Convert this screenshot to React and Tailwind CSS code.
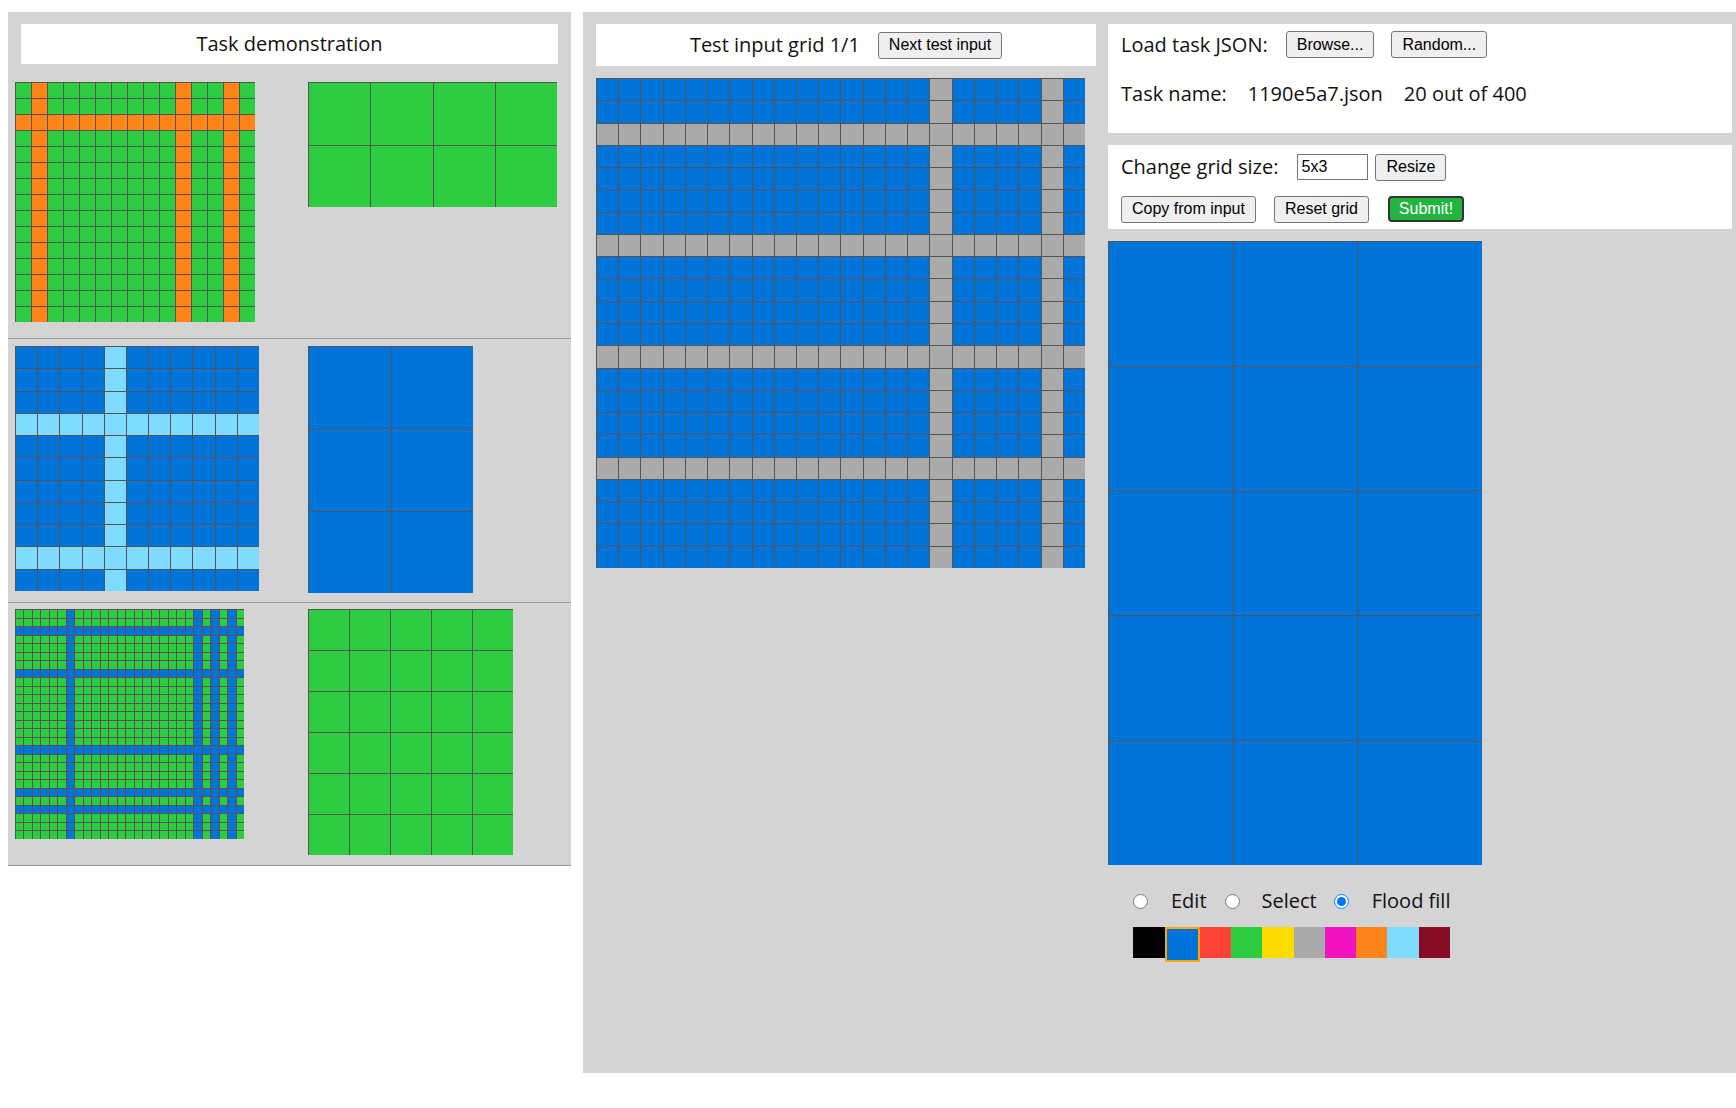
import React from 'react'

// ARC colour palette, 0..9
const COLORS = [
  'bg-[#000000]',
  'bg-[#0074d9]',
  'bg-[#ff4136]',
  'bg-[#2ecc40]',
  'bg-[#ffdc00]',
  'bg-[#aaaaaa]',
  'bg-[#f012be]',
  'bg-[#ff851b]',
  'bg-[#7fdbff]',
  'bg-[#870c25]',
]

const makeGrid = (rows, cols, bg, fg, lineRows = [], lineCols = []) =>
  Array.from({ length: rows }, (_, r) =>
    Array.from({ length: cols }, (_, c) =>
      lineRows.includes(r) || lineCols.includes(c) ? fg : bg))

const PAIRS = [
  {
    input:  { data: makeGrid(15, 15, 3, 7, [2], [1, 10, 13]), w: 240, h: 240 },
    output: { data: makeGrid(2, 4, 3, 3), w: 249, h: 125 },
    pt: 'pt-[18px]',
  },
  {
    input:  { data: makeGrid(11, 11, 1, 8, [3, 9], [4]), w: 244, h: 245 },
    output: { data: makeGrid(3, 2, 1, 1), w: 165, h: 247 },
    pt: 'pt-[7px]',
  },
  {
    input:  { data: makeGrid(27, 27, 3, 1, [2, 7, 16, 21, 23], [6, 21, 23, 25]), w: 229, h: 230 },
    output: { data: makeGrid(6, 5, 3, 3), w: 205, h: 246 },
    pt: 'pt-[6px]',
  },
]

const TEST_INPUT = makeGrid(22, 22, 1, 5, [2, 7, 12, 17], [15, 20])
const OUTPUT     = makeGrid(5, 3, 1, 1)

const PALETTE = [
  { c: 0, w: 'w-[32px]' },
  { c: 1, w: 'w-[35px]', selected: true },
  { c: 2, w: 'w-[31px]' },
  { c: 3, w: 'w-[31px]' },
  { c: 4, w: 'w-[32px]' },
  { c: 5, w: 'w-[31px]' },
  { c: 6, w: 'w-[31px]' },
  { c: 7, w: 'w-[31px]' },
  { c: 8, w: 'w-[32px]' },
  { c: 9, w: 'w-[31px]' },
]

const Grid = ({ data, w, h }) => (
  <div className="grid shrink-0"
    style={{
      width: w,
      height: h,
      gridTemplateColumns: `repeat(${data[0].length}, minmax(0, 1fr))`,
      gridTemplateRows: `repeat(${data.length}, minmax(0, 1fr))`,
    }}>
    {data.flat().map((c, i) => (
      <div key={i} className={`border-l border-t border-[#555555] ${COLORS[c]}`} />
    ))}
  </div>
)

const Btn = ({ children, className = '' }) => (
  <button className={`h-[27px] px-[10px] border border-[#767676] rounded-[3px] bg-[#efefef]
    text-[16px] leading-none text-black font-['Liberation_Sans',Arial,sans-serif] ${className}`}>
    {children}
  </button>
)

const App = () => {
  return (
    <div className="min-h-screen bg-white flex items-start pt-3 pl-2 text-[20px] text-[#111111]
                    font-['Open_Sans','Noto_Sans',sans-serif]">

      {/* Task demonstration */}
      <div className="w-[563px] bg-[#d4d4d4] pt-3">
        <div className="mx-[13px] h-[40px] bg-white flex items-center justify-center">
          Task demonstration
        </div>
        {PAIRS.map((p, i) => (
          <div key={i} className={`${p.pt} pb-[6px] pl-[7px] border-b border-[#999999]`}>
            <div className="h-[250px] flex items-start">
              <div className="w-[293px]">
                <Grid {...p.input} />
              </div>
              <Grid {...p.output} />
            </div>
          </div>
        ))}
      </div>

      {/* Workspace */}
      <div className="ml-3 w-[1153px] h-[1061px] bg-[#d4d4d4] pt-3 pl-[13px] pr-1 flex items-start gap-3">

        {/* Test input */}
        <div className="w-[500px]">
          <div className="h-[42px] bg-white flex items-center justify-center gap-[18px]">
            <span>Test input grid 1/1</span>
            <Btn>Next test input</Btn>
          </div>
          <div className="mt-3">
            <Grid data={TEST_INPUT} w={489} h={490} />
          </div>
        </div>

        {/* Controls + output */}
        <div className="w-[624px]">
          <div className="h-[109px] bg-white pl-[13px] pt-[4px]">
            <div className="flex items-center h-[33px]">
              <span>Load task JSON:</span>
              <Btn className="ml-[18px]">Browse...</Btn>
              <Btn className="ml-[17px]">Random...</Btn>
            </div>
            <div className="flex items-center h-[33px] mt-[16px]">
              <span>Task name:</span>
              <span className="ml-[21px]">1190e5a7.json</span>
              <span className="ml-[21px]">20 out of 400</span>
            </div>
          </div>

          <div className="mt-3 h-[84px] bg-white pl-[13px] pt-[8px]">
            <div className="flex items-center h-[28px]">
              <span>Change grid size:</span>
              <input defaultValue="5x3"
                className="ml-[19px] w-[71px] h-[26px] border border-[#767676] px-[3px] bg-white
                           text-[16px] text-black font-['Liberation_Sans',Arial,sans-serif] outline-none" />
              <Btn className="ml-[7px] h-[26px]">Resize</Btn>
            </div>
            <div className="flex items-center h-[28px] mt-[14px]">
              <Btn className="h-[26px]">Copy from input</Btn>
              <Btn className="ml-[18px] h-[26px]">Reset grid</Btn>
              <button className="ml-[19px] h-[26px] px-[9px] border-2 border-[#333333] rounded-[4px] bg-[#22b43f]
                                 text-[16px] leading-none text-white font-['Liberation_Sans',Arial,sans-serif]">
                Submit!
              </button>
            </div>
          </div>

          <div className="mt-3">
            <Grid data={OUTPUT} w={374} h={624} />
          </div>

          {/* Tool modes */}
          <div className="mt-[25px] ml-[25px] h-[22px] flex items-center">
            <input type="radio" name="tool" className="m-0 w-[15px] h-[15px]" />
            <span className="ml-[23px]">Edit</span>
            <input type="radio" name="tool" className="m-0 ml-[18px] w-[15px] h-[15px]" />
            <span className="ml-[22px]">Select</span>
            <input type="radio" name="tool" defaultChecked className="m-0 ml-[17px] w-[15px] h-[15px] accent-[#0075ff]" />
            <span className="ml-[23px]">Flood fill</span>
          </div>

          {/* Colour picker */}
          <div className="mt-[15px] ml-[25px] flex items-start">
            {PALETTE.map(s => (
              <div key={s.c}
                className={`${s.w} ${COLORS[s.c]} ${s.selected
                  ? 'h-[35px] border-2 border-[#ffa500]'
                  : 'h-[31px]'}`} />
            ))}
          </div>
        </div>
      </div>
    </div>
  )
}

export default App
